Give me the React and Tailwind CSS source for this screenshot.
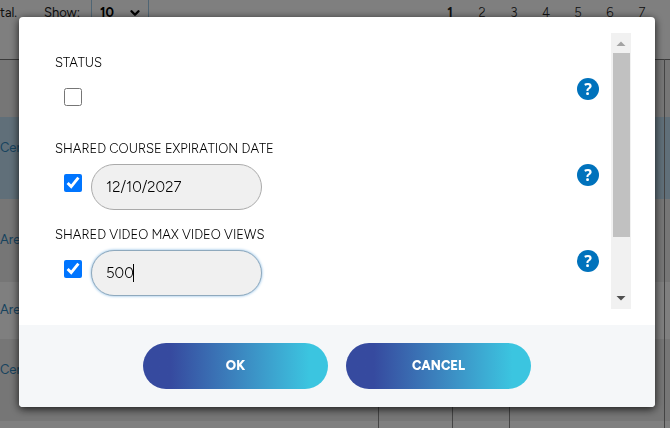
// src/App.jsx
import React, { useState } from 'react';
import { ChevronDown } from 'lucide-react';

const PAGES = [1, 2, 3, 4, 5, 6, 7];

const COURSES = [
  { name: 'Cer', row: 'h-[82px] bg-[#c0dff2]', cell: 'pb-5' },
  { name: 'Are', row: 'h-[83px] bg-[#ececec]' },
  { name: 'Are', row: 'h-[57px] bg-white' },
  { name: 'Cer', row: 'h-[82px] bg-[#ececec]', cell: 'pb-5' },
  { name: '', row: 'h-[57px] bg-white' }
];

const CourseList = () => (
  <div className="h-screen overflow-hidden bg-white text-[13px] text-[#222222]">
    <div className="flex h-[59px] items-start justify-between pr-3">
      <div className="flex h-[26px] items-center">
        <span className="w-11">tal.</span>
        <label htmlFor="show">Show:</label>
        <div className="relative ml-[11px] border-x border-[#9fcbe8]">
          <select
            id="show"
            defaultValue="10"
            className="h-[26px] w-14 appearance-none bg-transparent pl-2 font-bold text-black"
          >
            <option>10</option>
            <option>20</option>
          </select>
          <ChevronDown
            size={14}
            strokeWidth={4}
            className="pointer-events-none absolute top-1.5 right-1.5 text-black"
          />
        </div>
      </div>
      <nav className="flex h-[26px] items-center">
        {PAGES.map(page => (
          <a
            key={page}
            href={`#page-${page}`}
            className={`w-8 text-center ${page === 1 ? 'font-bold' : 'font-light'}`}
          >
            {page}
          </a>
        ))}
      </nav>
    </div>

    <table className="w-full table-fixed border-collapse border-t border-[#777777]">
      <thead>
        <tr className="h-[57px] bg-[#ececec]">
          <th />
          <th className="w-[74px] border-l border-[#888888]" />
          <th className="w-[57px] border-l border-[#888888]" />
          <th className="w-[155px] border-l border-[#888888]" />
          <th className="w-1.5 border-l border-[#888888]" />
        </tr>
      </thead>
      <tbody>
        {COURSES.map((course, i) => (
          <tr key={i} className={course.row}>
            <td className={course.cell}>
              <a href="#course" className="block text-[#2f86bd]">{course.name}</a>
            </td>
            <td className="border-l border-[#888888]" />
            <td className="border-l border-[#888888]" />
            <td className="border-l border-[#888888]" />
            <td className="border-l border-[#888888]" />
          </tr>
        ))}
      </tbody>
    </table>
  </div>
);

const Field = ({ id, label, checked, onToggle, children }) => (
  <div className="h-[86px]">
    <label htmlFor={id} className="mb-[5px] block text-[13px]/5 font-light text-black">{label}</label>
    <div className="flex items-start pr-3 pl-[9px]">
      <input
        id={id}
        type="checkbox"
        checked={checked}
        onChange={onToggle}
        className="mt-2.5 mr-[9px] size-[18px]"
      />
      {children}
      <button
        type="button"
        aria-label={`Help: ${label}`}
        className="ml-auto flex size-[22px] items-center justify-center rounded-full bg-[#0072bc] font-['Noto_Sans'] text-base/5 font-bold text-white"
      >
        ?
      </button>
    </div>
  </div>
);

const ScrollBar = () => (
  <div className="flex w-5 shrink-0 flex-col items-center bg-[#f1f1f1]">
    <svg viewBox="0 0 20 20" className="size-5 shrink-0">
      <path d="M5.5 13 10 8.5 14.5 13z" fill="#a3a3a3" />
    </svg>
    <div className="h-[184px] w-[17px] bg-[#c1c1c1]" />
    <svg viewBox="0 0 20 20" className="mt-auto size-5 shrink-0">
      <path d="M5.5 7 10 11.5 14.5 7z" fill="#505050" />
    </svg>
  </div>
);

const inputClass =
  'h-[46px] w-[171px] rounded-full border bg-[#f0f0f0] px-3.5 text-[15px] font-light text-black outline-none';
const buttonClass =
  'h-[46px] w-[185px] rounded-full bg-linear-to-r from-[#364a9f] from-15% to-[#3bc5e0] to-90% text-[13px] font-extrabold text-white';

const App = () => {
  const [enabled, setEnabled] = useState({ status: false, expiration: true, views: true });
  const [expiration, setExpiration] = useState('12/10/2027');
  const [views, setViews] = useState('500');

  const toggle = (name) => setEnabled({ ...enabled, [name]: !enabled[name] });

  return (
    <div className="font-['Figtree','Lato',sans-serif]">
      <CourseList />

      <div className="fixed inset-0 bg-black/50 pt-[17px] pr-[15px] pl-[19px]">
        <div
          role="dialog"
          aria-modal="true"
          className="overflow-hidden rounded-sm bg-white shadow-[0_2px_8px_rgba(0,0,0,0.8)]"
        >
          <div className="flex h-[308px] py-4 pr-6 pl-9">
            <div className="grow overflow-hidden pt-5">
              <Field
                id="status"
                label="STATUS"
                checked={enabled.status}
                onToggle={() => toggle('status')}
              />
              <Field
                id="expiration"
                label="SHARED COURSE EXPIRATION DATE"
                checked={enabled.expiration}
                onToggle={() => toggle('expiration')}
              >
                <input
                  type="text"
                  aria-label="Expiration date"
                  value={expiration}
                  onChange={(e) => setExpiration(e.target.value)}
                  className={`${inputClass} border-[#aaaaaa]`}
                />
              </Field>
              <Field
                id="views"
                label="SHARED VIDEO MAX VIDEO VIEWS"
                checked={enabled.views}
                onToggle={() => toggle('views')}
              >
                <div className="relative">
                  <input
                    type="text"
                    aria-label="Max video views"
                    value={views}
                    onChange={(e) => setViews(e.target.value)}
                    className={`${inputClass} border-[#8fa9bd] shadow-[0_0_3px_#7db4e0]`}
                  />
                  <span className="absolute top-3.5 left-[42px] h-[18px] w-px bg-black" />
                </div>
              </Field>
            </div>
            <ScrollBar />
          </div>

          <div className="flex justify-center gap-[18px] bg-[#f5f7f9] py-[18px]">
            <button type="button" className={buttonClass}>OK</button>
            <button type="button" className={buttonClass}>CANCEL</button>
          </div>
        </div>
      </div>
    </div>
  );
};

export default App;
